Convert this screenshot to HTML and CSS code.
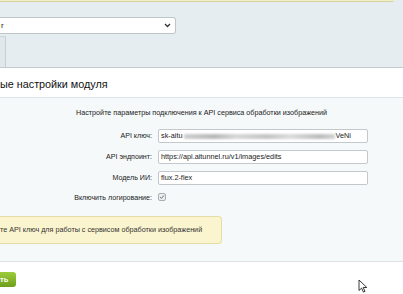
FILE: index.html
```html
<!DOCTYPE html>
<html lang="ru">
<head>
<meta charset="UTF-8" />
<meta name="viewport" content="width=device-width, initial-scale=1" />
<title>Настройки модуля</title>
<link rel="stylesheet" href="styles.css">
</head>
<body>

<!-- верхняя панель с выбором модуля -->
<div class="top">
  <div class="notice-edge"></div>
  <div class="select">
    <span class="select-text">r</span>
    <svg class="chevron" width="7" height="5" viewBox="0 0 7 5"><path d="M1 1l2.5 2.5L6 1" fill="none" stroke="#333" stroke-width="1.3"/></svg>
  </div>
  <div class="tabs">
    <div class="tab"></div>
  </div>
</div>

<div class="title">ые настройки модуля</div>

<!-- форма -->
<div class="content">
  <p class="intro">Настройте параметры подключения к API сервиса обработки изображений</p>

  <div class="form">
    <label class="label">API ключ:</label>
    <div class="field">sk-aitu<span class="blur"></span>VeNi</div>

    <label class="label">API эндпоинт:</label>
    <div class="field">https://api.aitunnel.ru/v1/images/edits</div>

    <label class="label">Модель ИИ:</label>
    <div class="field">flux.2-flex</div>

    <label class="label label-check">Включить логирование:</label>
    <div class="check-cell"><span class="checkbox"><svg width="8" height="8" viewBox="0 0 8 8"><path d="M1.6 4.2l1.6 1.6L6.6 2" fill="none" stroke="#555" stroke-width="1.1"/></svg></span></div>
  </div>

  <div class="note">те API ключ для работы с сервисом обработки изображений</div>
</div>

<div class="footer">
  <button class="save">ть</button>
</div>

<svg class="cursor" width="10" height="14" viewBox="0 0 10 14"><path d="M1 1v10.5l2.6-2.4 1.8 4 1.6-.7-1.8-3.9H8.8z" fill="#fff" stroke="#222" stroke-width="0.9" stroke-linejoin="round"/></svg>

</body>
</html>
```

FILE: styles.css
```css
body {
  margin: 0;
  width: 403px;
  height: 294px;
  overflow: hidden;
  font-family: "Liberation Sans", Arial, sans-serif;
  background: #fff;
  color: #333;
  position: relative;
}
.top {
  height: 67px;
  background: #e6edf0;
  border-bottom: 1px solid #c4cbce;
  display: flex;
  flex-direction: column;
}
.notice-edge {
  width: 394px;
  height: 1px;
  background: #f3f0c8;
  border-bottom: 1px solid #d4d19c;
  border-bottom-right-radius: 3px;
}
.select {
  margin-top: 15px;
  width: 175px;
  height: 15px;
  background: #fff;
  border: 1px solid #bfc6c9;
  border-left: none;
  border-radius: 0 3px 3px 0;
  display: flex;
  align-items: center;
  justify-content: space-between;
  font-size: 8px;
  color: #222;
}
.select-text {
  padding-left: 1px;
}
.chevron {
  margin-right: 4px;
}
.tabs {
  margin-top: 2px;
  flex: 1;
  display: flex;
}
.tab {
  width: 5px;
  background: #e1e8eb;
  border-top: 1px solid #cfd6d9;
  border-right: 1px solid #c9d0d3;
}
.title {
  height: 29px;
  line-height: 32px;
  background: #fff;
  border-bottom: 1px solid #dde5e8;
  font-size: 10.8px;
  color: #111;
}
.content {
  background: #f5f9fa;
  height: 164px;
  border-bottom: 1px solid #dbe3e6;
  padding-top: 10px;
  box-sizing: border-box;
}
.intro {
  margin: 0;
  text-align: center;
  font-size: 7.2px;
  line-height: 10px;
  color: #222;
}
.form {
  margin-top: 11px;
  display: grid;
  grid-template-columns: 152px 210px;
  column-gap: 6px;
  row-gap: 7px;
  align-items: center;
}
.label {
  text-align: right;
  font-size: 7.1px;
  color: #222;
}
.field {
  height: 12px;
  line-height: 12px;
  background: #fff;
  border: 1px solid #c2c8cb;
  border-radius: 2px;
  padding-left: 2px;
  font-size: 7.3px;
  color: #222;
  display: flex;
  align-items: center;
  white-space: nowrap;
}
.blur {
  display: inline-block;
  width: 151px;
  height: 5px;
  margin: 0 1px;
  background: linear-gradient(90deg, #d0d0d0, #b8b8b8 20%, #d8d8d8 35%, #c4c4c4 55%, #dcdcdc 70%, #bdbdbd 90%, #d4d4d4);
  filter: blur(1.2px);
}
.label-check {
  margin-top: 1px;
}
.check-cell {
  height: 10px;
  display: flex;
  align-items: center;
}
.checkbox {
  width: 8px;
  height: 8px;
  box-sizing: border-box;
  border: 1px solid #a9b0b3;
  border-radius: 2px;
  background: #e9edef;
  display: flex;
  align-items: center;
  justify-content: center;
}
.note {
  margin-top: 14px;
  width: 222px;
  height: 28px;
  box-sizing: border-box;
  background: #fbf5cf;
  border: 1px solid #e6dca6;
  border-left: none;
  border-radius: 0 4px 4px 0;
  font-size: 7.2px;
  line-height: 26px;
  white-space: nowrap;
  color: #333;
}
.footer {
  padding-top: 10px;
}
.save {
  display: block;
  width: 16px;
  height: 15px;
  padding: 0;
  border: none;
  border-radius: 0 3px 3px 0;
  background: linear-gradient(#9ccc3c, #6f9f1a);
  color: #fff;
  font-family: "Liberation Sans", Arial, sans-serif;
  font-weight: bold;
  font-size: 7.5px;
  text-align: left;
}
.cursor {
  position: absolute;
  left: 358px;
  top: 279px;
}
```
